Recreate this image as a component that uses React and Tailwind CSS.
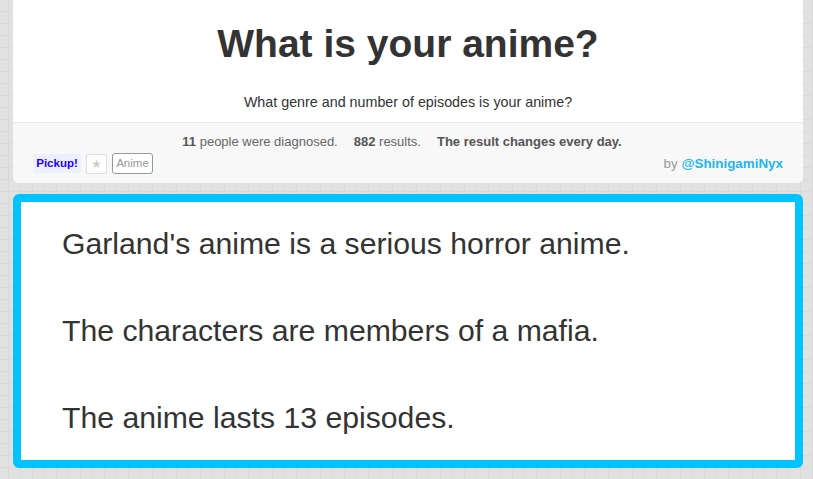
export default function App() {
  const grid = {
    backgroundColor: "#e1e1e1",
    backgroundImage:
      "linear-gradient(#d9d9d9 1px, transparent 1px), linear-gradient(90deg, #d9d9d9 1px, transparent 1px)",
    backgroundSize: "12px 12px",
    backgroundPosition: "8px 11px",
  };
  return (
    <div
      className="w-[813px] h-[479px] overflow-hidden"
      style={grid}
    >
      <div className="mx-[13px] w-[790px] flex flex-col gap-[11px]" style={{ fontFamily: '"Liberation Sans", Arial, sans-serif' }}>
        <div className="bg-white rounded-b-[6px] overflow-hidden">
          <div className="h-[122px] flex flex-col items-center">
            <h1 className="mt-[21px] text-[39px] leading-[46px] font-bold text-[#333]">What is your anime?</h1>
            <p className="mt-[27px] text-[14.3px] leading-[16px] text-[#333]">What genre and number of episodes is your anime?</p>
          </div>
          <div className="h-[61px] bg-[#f8f8f8] border-t border-[#ececec] relative">
            <div className="pt-[11px] pr-[12px] text-center text-[13px] leading-[16px] text-[#666]">
              <b className="text-[#555]">11</b> people were diagnosed.
              <span className="inline-block w-[16px]" />
              <b className="text-[#555]">882</b> results.
              <span className="inline-block w-[16px]" />
              <b className="text-[#555]">The result changes every day.</b>
            </div>
            <div className="flex items-center justify-between pl-[20px] pr-[20px] mt-[3px]">
              <div className="flex items-center gap-[5px]">
                <span className="w-[48px] h-[19px] rounded-[2px] bg-[#eef0ff] text-[#1a00ff] text-[11.5px] font-bold leading-[19px] text-center">Pickup!</span>
                <span className="w-[21px] h-[20px] border border-[#ddd] rounded-[2px] bg-white flex items-center justify-center text-[#ccc] text-[12px] leading-none">★</span>
                <span className="w-[41px] h-[21px] border border-[#999] rounded-[3px] bg-white text-[#999] text-[11.5px] leading-[19px] text-center">Anime</span>
              </div>
              <div className="text-[13.4px] leading-[16px] text-[#999]">
                by <span className="font-bold text-[#1eb6f0]">@ShinigamiNyx</span>
              </div>
            </div>
          </div>
        </div>
        <div className="h-[274px] border-[8px] border-[#00c3ff] rounded-[6px] bg-white px-[41px] pt-[20px] flex flex-col gap-[43px] text-[30.2px] leading-[44px] text-[#333]">
          <div>Garland's anime is a serious horror anime.</div>
          <div>The characters are members of a mafia.</div>
          <div>The anime lasts 13 episodes.</div>
        </div>
      </div>
    </div>
  );
}
